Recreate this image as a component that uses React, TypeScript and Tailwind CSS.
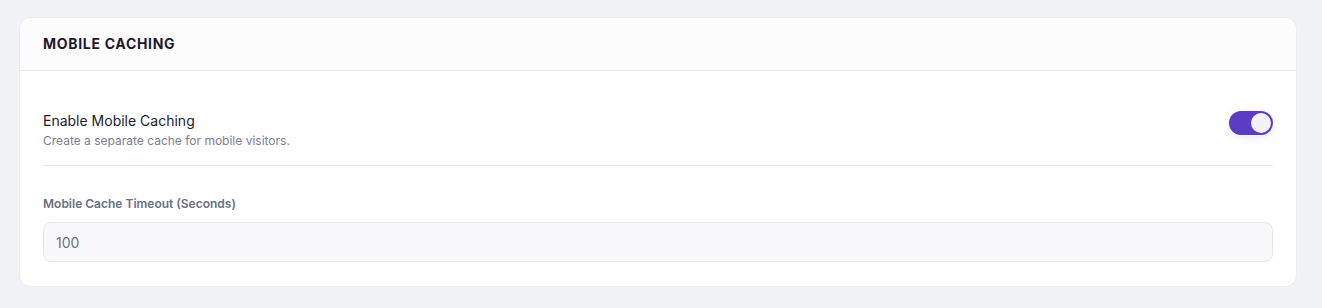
import React, { useState } from "react";

const font = { fontFamily: "Inter, 'Noto Sans', sans-serif" };

const Toggle: React.FC<{ on: boolean; onChange: (v: boolean) => void }> = ({ on, onChange }) => (
  <button
    type="button"
    onClick={() => onChange(!on)}
    className={`relative h-[24px] w-[44px] shrink-0 rounded-full shadow-[0_2px_10px_rgba(91,60,196,0.12)] ${
      on ? "bg-[#5b3cc4]" : "bg-gray-300"
    }`}
  >
    <span
      className={`absolute top-[2px] h-[20px] w-[20px] rounded-full bg-[#f3f2fa] ${
        on ? "left-[22px]" : "left-[2px]"
      }`}
    />
  </button>
);

export default function App() {
  const [enabled, setEnabled] = useState(true);
  const [timeout, setTimeoutValue] = useState("100");

  return (
    <div className="min-h-[308px] bg-[#f1f2f6] pl-[19px] pr-[25px] pt-[17px]" style={font}>
      <div className="overflow-hidden rounded-xl border border-[#ebecf0] bg-white">
        <div className="flex h-[53px] items-center border-b border-[#ebecf0] bg-[#fcfcfc] px-[23px]">
          <h2 className="text-sm font-bold tracking-[0.05em] text-[#1c1a2e]">MOBILE CACHING</h2>
        </div>

        <div className="px-[23px] pb-6 pt-6">
          <div className="flex items-start justify-between border-b border-[#e6e7eb] py-4">
            <div>
              <div className="text-sm leading-5 text-[#1c1a2e]">Enable Mobile Caching</div>
              <div className="mt-0.5 text-xs leading-4 text-[#7c8090]">Create a separate cache for mobile visitors.</div>
            </div>
            <Toggle on={enabled} onChange={setEnabled} />
          </div>

          <div className="pt-[30px]">
            <label className="mb-[10px] block text-xs font-semibold leading-4 text-[#6b7080]">
              Mobile Cache Timeout (Seconds)
            </label>
            <input
              value={timeout}
              onChange={(e) => setTimeoutValue(e.target.value)}
              className="h-10 w-full rounded-lg border border-[#e6e7eb] bg-[#f8f8fa] px-3 text-sm text-[#6b7080] outline-none"
            />
          </div>
        </div>
      </div>
    </div>
  );
}
